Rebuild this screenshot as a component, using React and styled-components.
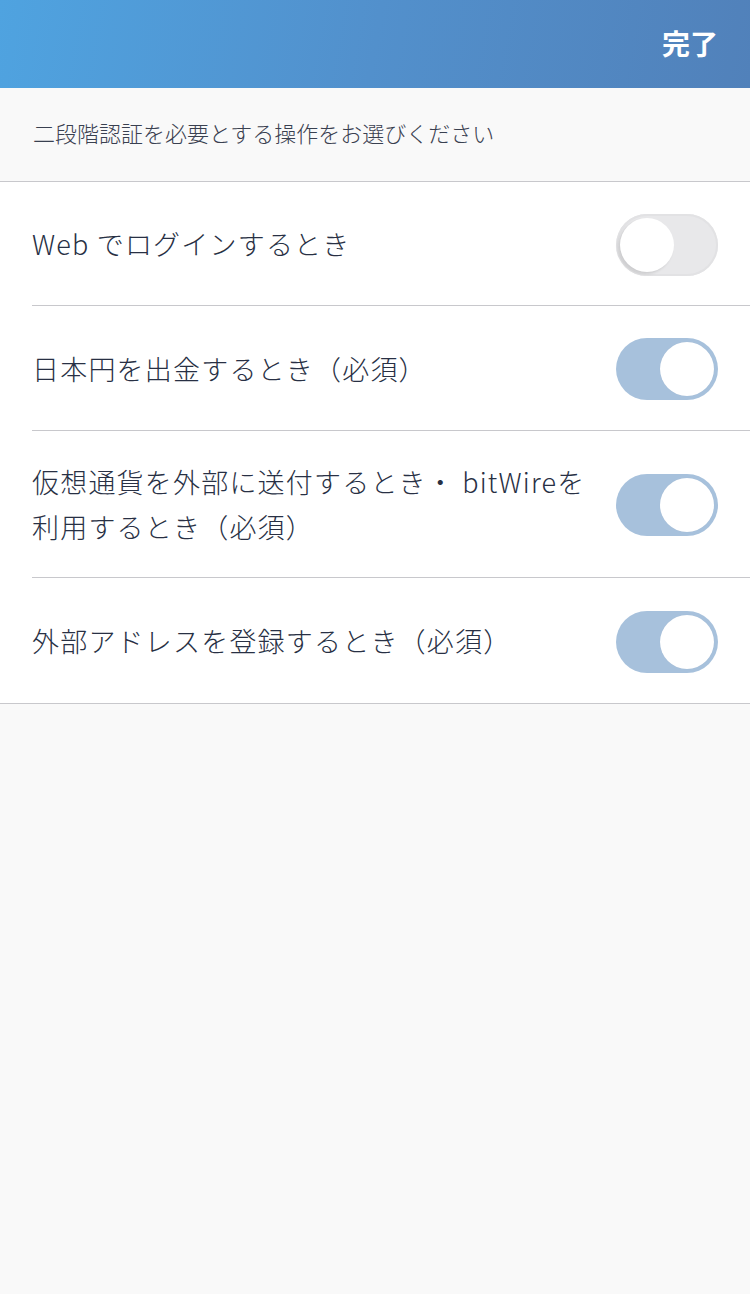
import React from "react";
import styled, { createGlobalStyle } from "styled-components";

const Global = createGlobalStyle`
  html, body { margin: 0; padding: 0; background: #f9f9f9; }
  body { font-family: "Noto Sans CJK JP", "Noto Sans", sans-serif; -webkit-font-smoothing: antialiased; }
  * { box-sizing: border-box; }
`;

const Page = styled.div`
  width: 750px;
  min-height: 1294px;
  background: #f9f9f9;
`;

const Header = styled.header`
  height: 88px;
  background: linear-gradient(100deg, #4fa3e0 0%, #5290cc 50%, #5181ba 100%);
  display: flex;
  align-items: center;
  justify-content: flex-end;
  padding: 0 32px 0 0;
`;

const DoneButton = styled.button`
  border: none;
  background: none;
  color: #ffffff;
  font-family: inherit;
  font-size: 28px;
  font-weight: 700;
  padding: 0;
  margin-top: -2px;
`;

const SectionHead = styled.div`
  height: 94px;
  display: flex;
  align-items: center;
  padding: 0 33px 5px;
  font-size: 22px;
  font-weight: 300;
  color: #394050;
  border-bottom: 1px solid #c8c8cc;
`;

const List = styled.ul`
  list-style: none;
  margin: 0;
  padding: 0 0 0 32px;
  background: #ffffff;
  border-bottom: 1px solid #c8c8cc;
`;

const Row = styled.li`
  display: flex;
  align-items: center;
  min-height: ${(p) => (p.$tall ? 147 : p.$first ? 124 : 125)}px;
  padding: 0 32px 0 0;
  border-bottom: ${(p) => (p.$last ? "none" : "1px solid #c8c8cc")};
  gap: 14px;
`;

const Label = styled.span`
  flex: 1;
  font-size: 27px;
  font-weight: 300;
  letter-spacing: 1.2px;
  line-height: 45px;
  color: #283044;
`;

const Track = styled.span`
  flex: 0 0 auto;
  position: relative;
  width: 102px;
  height: 62px;
  border-radius: 31px;
  background: ${(p) => (p.$on ? "#a7c1dc" : "#e8e8ea")};
  box-shadow: ${(p) => (p.$on ? "none" : "inset 0 0 0 2px #e2e2e4")};
  margin-top: 2px;
`;

const Knob = styled.span`
  position: absolute;
  top: 4px;
  left: ${(p) => (p.$on ? 44 : 4)}px;
  width: 54px;
  height: 54px;
  border-radius: 50%;
  background: #ffffff;
  box-shadow: ${(p) =>
    p.$on ? "0 0 1px rgba(0,0,0,0.06)" : "-2px 2px 3px rgba(0,0,0,0.12)"};
`;

const Toggle = ({ on }) => (
  <Track $on={on}>
    <Knob $on={on} />
  </Track>
);

const items = [
  { label: "Web でログインするとき", on: false },
  { label: "日本円を出金するとき（必須）", on: true },
  { label: "仮想通貨を外部に送付するとき・ bitWireを利用するとき（必須）", on: true, tall: true },
  { label: "外部アドレスを登録するとき（必須）", on: true },
];

export default function App() {
  return (
    <Page>
      <Global />
      <Header>
        <DoneButton>完了</DoneButton>
      </Header>
      <SectionHead>二段階認証を必要とする操作をお選びください</SectionHead>
      <List>
        {items.map((it, i) => (
          <Row key={i} $tall={it.tall} $first={i === 0} $last={i === items.length - 1}>
            <Label>{it.label}</Label>
            <Toggle on={it.on} />
          </Row>
        ))}
      </List>
    </Page>
  );
}
